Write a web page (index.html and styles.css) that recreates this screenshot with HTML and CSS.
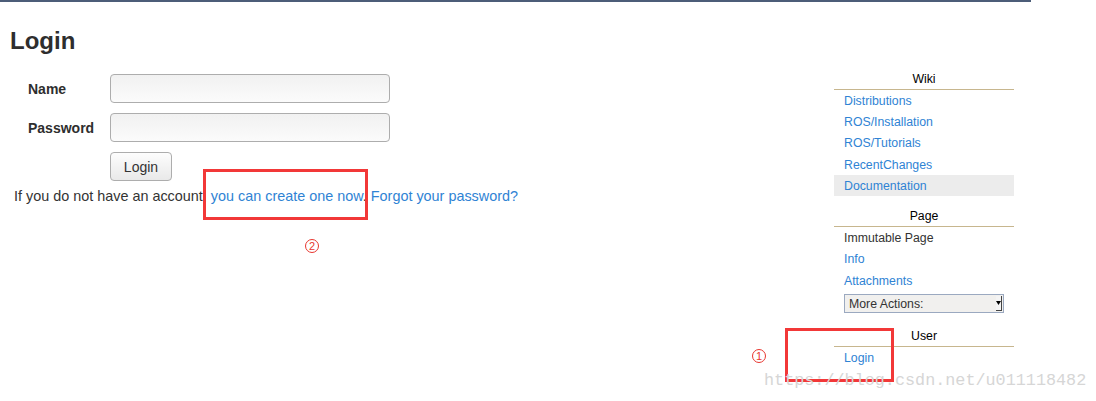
FILE: index.html
```html
<!DOCTYPE html>
<html>
<head>
<meta charset="utf-8">
<link rel="stylesheet" href="styles.css">
</head>
<body>
<div class="topbar"></div>
<div class="layout">
  <main class="content">
    <h1 class="title">Login</h1>
    <form class="login-form">
      <label class="label" for="name">Name</label>
      <input class="field" id="name" type="text">
      <label class="label" for="password">Password</label>
      <input class="field" id="password" type="password">
      <span></span>
      <div><button class="btn" type="button">Login</button></div>
    </form>
    <p class="hint">If you do not have an account, <a href="#">you can create one now</a>. <a href="#">Forgot your password?</a></p>
  </main>
  <aside class="sidebar">
    <section class="panel">
      <h2 class="panel-title">Wiki</h2>
      <ul class="menu">
        <li><a href="#">Distributions</a></li>
        <li><a href="#">ROS/Installation</a></li>
        <li><a href="#">ROS/Tutorials</a></li>
        <li><a href="#">RecentChanges</a></li>
        <li class="current"><a href="#">Documentation</a></li>
      </ul>
    </section>
    <section class="panel">
      <h2 class="panel-title">Page</h2>
      <ul class="menu">
        <li class="plain">Immutable Page</li>
        <li><a href="#">Info</a></li>
        <li><a href="#">Attachments</a></li>
      </ul>
      <div class="select">
        <span class="select-text">More Actions:</span>
        <span class="select-btn"><svg width="5" height="4" viewBox="0 0 5 4"><path d="M0 0H5L2.5 4Z" fill="#000"/></svg></span>
      </div>
    </section>
    <section class="panel panel-user">
      <h2 class="panel-title">User</h2>
      <ul class="menu">
        <li><a href="#">Login</a></li>
      </ul>
    </section>
  </aside>
</div>
<div class="mark mark-create"></div>
<div class="mark mark-login"></div>
<span class="num num-2">2</span>
<span class="num num-1">1</span>
<div class="watermark">https://blog.csdn.net/u011118482</div>
</body>
</html>
```
FILE: styles.css
```css
html, body {
  margin: 0;
  padding: 0;
  background: #fff;
}
body {
  font-family: "Liberation Sans", Arial, sans-serif;
  color: #333;
  position: relative;
  width: 1096px;
  height: 401px;
  overflow: hidden;
}
a {
  color: #2f83d4;
  text-decoration: none;
}
.topbar {
  width: 1031px;
  height: 2px;
  background: #4c5d78;
}
.layout {
  display: flex;
  align-items: flex-start;
}
.content {
  flex: 1;
  padding-left: 10px;
}
.title {
  margin: 25px 0 0;
  font-size: 24px;
  line-height: 28px;
  font-weight: bold;
  color: #2e2e2e;
}
.login-form {
  margin-top: 19px;
  display: grid;
  grid-template-columns: 100px 280px;
  row-gap: 10px;
  align-items: center;
}
.label {
  padding-left: 18px;
  font-size: 14px;
  font-weight: bold;
  color: #2e2e2e;
}
.field {
  box-sizing: border-box;
  width: 280px;
  height: 29px;
  margin: 0;
  border: 1px solid #adadad;
  border-radius: 4px;
  background: linear-gradient(to bottom, #f1f1f1, #fbfbfb);
}
.btn {
  box-sizing: border-box;
  width: 62px;
  height: 29px;
  margin: 0;
  border: 1px solid #adadad;
  border-radius: 4px;
  background: linear-gradient(to bottom, #fdfdfd, #e9e9e9);
  font-family: "Liberation Sans", Arial, sans-serif;
  font-size: 14px;
  color: #333;
}
.hint {
  margin: 7px 0 0 4px;
  font-size: 14.4px;
  line-height: 17px;
  color: #333;
}
.sidebar {
  width: 180px;
  margin: 67.5px 82px 0 0;
  font-size: 12.3px;
}
.panel-title {
  margin: 0;
  font-size: 12.3px;
  font-weight: normal;
  line-height: 19px;
  text-align: center;
  color: #000;
  border-bottom: 1px solid #c7b68e;
}
.panel + .panel {
  margin-top: 10.5px;
}
.panel-user {
  margin-top: 13.5px !important;
}
.menu {
  list-style: none;
  margin: 0;
  padding: 0;
}
.menu li {
  height: 21.4px;
  line-height: 22px;
  padding-left: 10px;
}
.menu li.current {
  background: #ececec;
}
.menu li.plain {
  color: #333;
}
.select {
  position: relative;
  box-sizing: border-box;
  margin: 3px 0 0 10px;
  width: 160px;
  height: 19px;
  border: 1px solid #9ba9c0;
  background: #f1f0ee;
  display: flex;
  align-items: center;
  color: #333;
}
.select-text {
  padding-left: 4px;
}
.select-btn {
  position: absolute;
  right: 1px;
  top: 1px;
  box-sizing: border-box;
  width: 6px;
  height: 15px;
  background: #f4f4f4;
  border-right: 1px solid #444;
  border-bottom: 1px solid #444;
  display: flex;
  align-items: center;
  justify-content: center;
}
.select-btn svg {
  display: block;
}
.mark {
  position: absolute;
  box-sizing: border-box;
  border: 3px solid #f23838;
}
.mark-create {
  left: 203px;
  top: 169px;
  width: 165px;
  height: 51px;
}
.mark-login {
  left: 785px;
  top: 328px;
  width: 109px;
  height: 54px;
}
.num {
  position: absolute;
  box-sizing: border-box;
  width: 14px;
  height: 14px;
  border: 1px solid #e8362f;
  border-radius: 50%;
  color: #e8362f;
  font-size: 11px;
  line-height: 12px;
  text-align: center;
}
.num-2 {
  left: 305px;
  top: 239px;
}
.num-1 {
  left: 752px;
  top: 349px;
}
.watermark {
  position: absolute;
  left: 764px;
  top: 371px;
  font-family: "Liberation Mono", "Courier New", monospace;
  font-size: 16.8px;
  line-height: 20px;
  color: #d6d6d6;
  white-space: nowrap;
}
```
